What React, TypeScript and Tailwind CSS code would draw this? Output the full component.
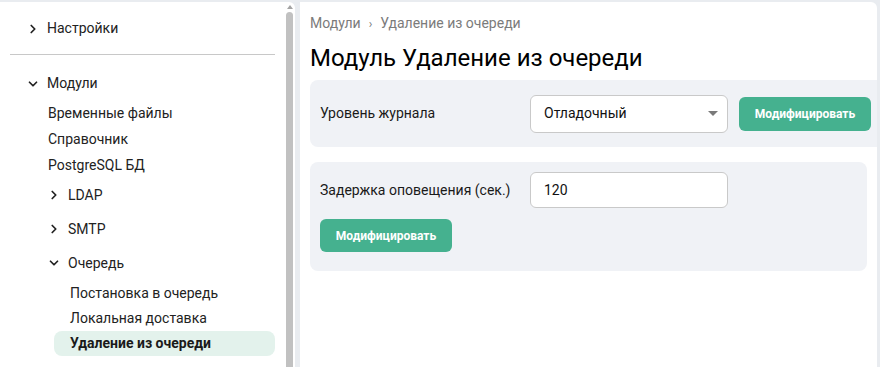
import { ChevronRight, ChevronDown } from "lucide-react";

const font = { fontFamily: "Roboto, 'Noto Sans', sans-serif" };

function NavRow({ label, level, open, leaf, active }: { label: string; level: number; open?: boolean; leaf?: boolean; active?: boolean }) {
  if (leaf) {
    return (
      <div
        className={
          level === 2
            ? active
              ? "ml-[54px] mr-[10px] h-[25px] flex items-center pl-[16px] rounded-lg bg-[#e3f2ec] font-bold text-[#1a1a1a]"
              : "h-[25px] flex items-center pl-[70px] text-[#222]"
            : "h-[26px] flex items-center pl-[48px] text-[#222]"
        }
      >
        {label}
      </div>
    );
  }
  const indent = level === 0 ? "pl-[26px]" : "pl-[47px]";
  return (
    <div className={`${level === 0 ? "h-[33px]" : "h-[34px]"} flex items-center ${indent} text-[#222]`}>
      <span className="w-[21px] flex items-center">
        {open ? <ChevronDown size={14} strokeWidth={3} /> : <ChevronRight size={14} strokeWidth={3} />}
      </span>
      <span>{label}</span>
    </div>
  );
}

export default function App() {
  return (
    <div className="w-[880px] h-[367px] bg-[#e9ecf0] flex pt-[2px] overflow-hidden text-[14px]" style={font}>
      <aside className="relative w-[295px] h-[400px] bg-white rounded-tr-md overflow-hidden">
        <div className="pt-[10px] pr-[10px]">
          <NavRow label="Настройки" level={0} />
          <div className="mt-[9px] mb-[12px] ml-[10px] border-t border-[#c8c8c8] w-[265px]" />
          <NavRow label="Модули" level={0} open />
          <NavRow label="Временные файлы" level={1} leaf />
          <NavRow label="Справочник" level={1} leaf />
          <NavRow label="PostgreSQL БД" level={1} leaf />
          <NavRow label="LDAP" level={1} />
          <NavRow label="SMTP" level={1} />
          <NavRow label="Очередь" level={1} open />
          <div className="mt-[1px]">
            <NavRow label="Постановка в очередь" level={2} leaf />
            <NavRow label="Локальная доставка" level={2} leaf />
            <NavRow label="Удаление из очереди" level={2} leaf active />
          </div>
          <NavRow label="Каналы" level={1} />
        </div>
        <div className="absolute right-[2px] top-0 w-[7px] h-full">
          <div className="flex justify-center pt-[3px]">
            <div className="w-0 h-0 border-l-[3px] border-r-[3px] border-b-[4px] border-l-transparent border-r-transparent border-b-[#a3a3a3]" />
          </div>
          <div className="mt-[3px] w-[7px] h-full bg-[#c1c1c1] rounded-t-sm" />
        </div>
      </aside>
      <main className="ml-[5px] w-[577px] h-[400px] bg-white rounded-tr-md pl-[10px] overflow-hidden">
        <div className="pt-[11px] h-[21px] flex items-center text-[#7b7b7b] text-[14px] box-content">
          <span>Модули</span>
          <span className="mx-[8px] text-[12px]">›</span>
          <span>Удаление из очереди</span>
        </div>
        <h1 className="mt-[10px] h-[28px] flex items-center text-[24px] text-black font-normal">Модуль Удаление из очереди</h1>
        <section className="mt-[8px] h-[67px] bg-[#f0f2f6] rounded-l-lg flex items-center pl-[10px]">
          <span className="w-[210px] text-[#1a1a1a] text-[14px]">Уровень журнала</span>
          <div className="w-[198px] h-[38px] bg-white border border-[#c9c9c9] rounded-md flex items-center justify-between pl-[13px] pr-[9px] text-[#111]">
            <span>Отладочный</span>
            <span className="w-0 h-0 border-l-[5px] border-r-[5px] border-t-[5px] border-l-transparent border-r-transparent border-t-[#7a7a7a]" />
          </div>
          <button className="ml-[11px] w-[132px] h-[34px] bg-[#45b18f] rounded-md text-white text-[12px] font-bold">Модифицировать</button>
        </section>
        <section className="mt-[15px] w-[557px] h-[109px] bg-[#f0f2f6] rounded-lg pl-[10px] pt-[10px]">
          <div className="flex items-center">
            <span className="w-[210px] text-[#1a1a1a] text-[14px]">Задержка оповещения (сек.)</span>
            <div className="w-[198px] h-[36px] bg-white border border-[#c9c9c9] rounded-md flex items-center pl-[13px] text-[#111]">120</div>
          </div>
          <button className="mt-[11px] w-[132px] h-[33px] bg-[#45b18f] rounded-md text-white text-[12px] font-bold">Модифицировать</button>
        </section>
      </main>
    </div>
  );
}
